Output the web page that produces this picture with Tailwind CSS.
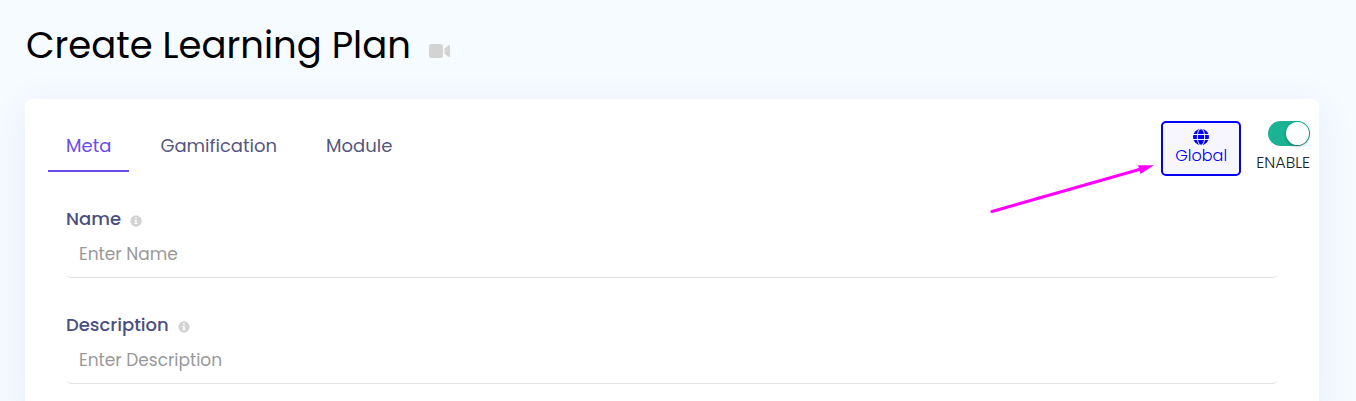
<!DOCTYPE html>
<html lang="en">
<head>
    <meta charset="UTF-8">
    <meta name="viewport" content="width=device-width, initial-scale=1.0">
    <title>Create Learning Plan</title>
    <script src="https://cdn.jsdelivr.net/npm/@tailwindcss/browser@4"></script>
</head>
<body class="bg-[#f5fbff] font-[Poppins,Inter,sans-serif] overflow-hidden">
    <div class="min-h-screen flex flex-col pl-[25px] pr-[37px]">
        <!-- Page title -->
        <header class="flex items-center gap-[18px] h-[99px] pb-[10px] pl-[1px]">
            <h1 class="text-[37px] leading-[48px] text-black">Create Learning Plan</h1>
            <svg class="w-[22px] h-4 mt-3 text-[#d3d3d3]" viewBox="0 0 22 16" fill="currentColor" aria-hidden="true">
                <rect x="0" y="1" width="14" height="14" rx="2.5"/>
                <path d="M15.500 5.300 19.600 2.300Q21 1.600 21 3V13Q21 14.400 19.600 13.700L15.500 10.700Z"/>
            </svg>
        </header>

        <!-- Form card -->
        <main class="grow bg-white rounded-t-lg shadow-[0_8px_40px_rgba(90,80,160,0.08)] pl-[23px] pr-[9px] pt-[22px]">
            <div class="flex justify-between items-start h-[86px]">
                <nav class="flex gap-[13px] text-lg leading-6 text-[#55567f]">
                    <a href="#meta" class="px-[18px] pt-[13px] pb-3 border-b-2 border-[#6a4bee] text-[#6a4bee]">Meta</a>
                    <a href="#gamification" class="px-[18px] pt-[13px] pb-3">Gamification</a>
                    <a href="#module" class="px-[18px] pt-[13px] pb-3">Module</a>
                </nav>

                <div class="flex items-start gap-[15px]">
                    <div class="relative">
                        <button type="button" class="w-20 h-[55px] flex flex-col items-center pt-[6px] rounded-[5px] border-2 border-[#0000f5] bg-[#f7f6ff] text-[#0000f5] text-base leading-[22px] font-light">
                            <svg class="w-4 h-4" viewBox="0 0 16 16" aria-hidden="true">
                                <circle cx="8" cy="8" r="8" fill="currentColor"/>
                                <g fill="none" stroke="#f7f6ff" stroke-width="1">
                                    <ellipse cx="8" cy="8" rx="3.700" ry="8.300"/>
                                    <path d="M0 5.500H16M0 10.500H16"/>
                                </g>
                            </svg>
                            Global
                        </button>
                        <!-- Pointer arrow -->
                        <svg class="absolute top-[39px] right-full mr-1 w-[170px] h-14 pointer-events-none" viewBox="0 0 170 56" aria-hidden="true">
                            <path d="M5 51.500 154 9" stroke="#ff00ff" stroke-width="3" stroke-linecap="round"/>
                            <path d="M167 5.300 151 5.300 153.500 14Z" fill="#ff00ff"/>
                        </svg>
                    </div>
                    <label class="flex flex-col items-end gap-[6px] text-base leading-[22px] font-light text-[#212529]">
                        <input type="checkbox" checked class="peer sr-only">
                        <span class="flex justify-end w-[42px] h-[25px] rounded-full bg-[#b9b9b9] peer-checked:bg-[#1bb394] p-px">
                            <span class="size-[23px] rounded-full bg-white shadow-[0_1px_3px_rgba(0,0,0,0.4)]"></span>
                        </span>
                        ENABLE
                    </label>
                </div>
            </div>

            <form class="pl-[18px] pr-8">
                <div class="h-[106px]">
                    <div class="flex items-center gap-[9px]">
                        <label for="name" class="text-lg leading-6 font-medium text-[#4b4f80]">Name</label>
                        <svg class="size-3 mt-1" viewBox="0 0 12 12" aria-hidden="true">
                            <circle cx="6" cy="6" r="5.700" fill="#d3d3d3"/>
                            <path d="M5.200 2.300h1.600v1.500H5.200zM4.500 4.900h2.200v3.200h.8v1H4.500v-1h.8V5.900h-.8z" fill="#fff"/>
                        </svg>
                    </div>
                    <input id="name" type="text" placeholder="Enter Name" class="w-full h-[47px] pl-[13px] rounded-[5px] border-b border-[#e2e2e6] text-[17px] placeholder:text-[#999999] outline-none">
                </div>
                <div class="h-[106px]">
                    <div class="flex items-center gap-[9px]">
                        <label for="description" class="text-lg leading-6 font-medium text-[#4b4f80]">Description</label>
                        <svg class="size-3 mt-1" viewBox="0 0 12 12" aria-hidden="true">
                            <circle cx="6" cy="6" r="5.700" fill="#d3d3d3"/>
                            <path d="M5.200 2.300h1.600v1.500H5.200zM4.500 4.900h2.200v3.200h.8v1H4.500v-1h.8V5.900h-.8z" fill="#fff"/>
                        </svg>
                    </div>
                    <input id="description" type="text" placeholder="Enter Description" class="w-full h-[47px] pl-[13px] rounded-[5px] border-b border-[#e2e2e6] text-[17px] placeholder:text-[#999999] outline-none">
                </div>
            </form>
        </main>
    </div>
</body>
</html>
